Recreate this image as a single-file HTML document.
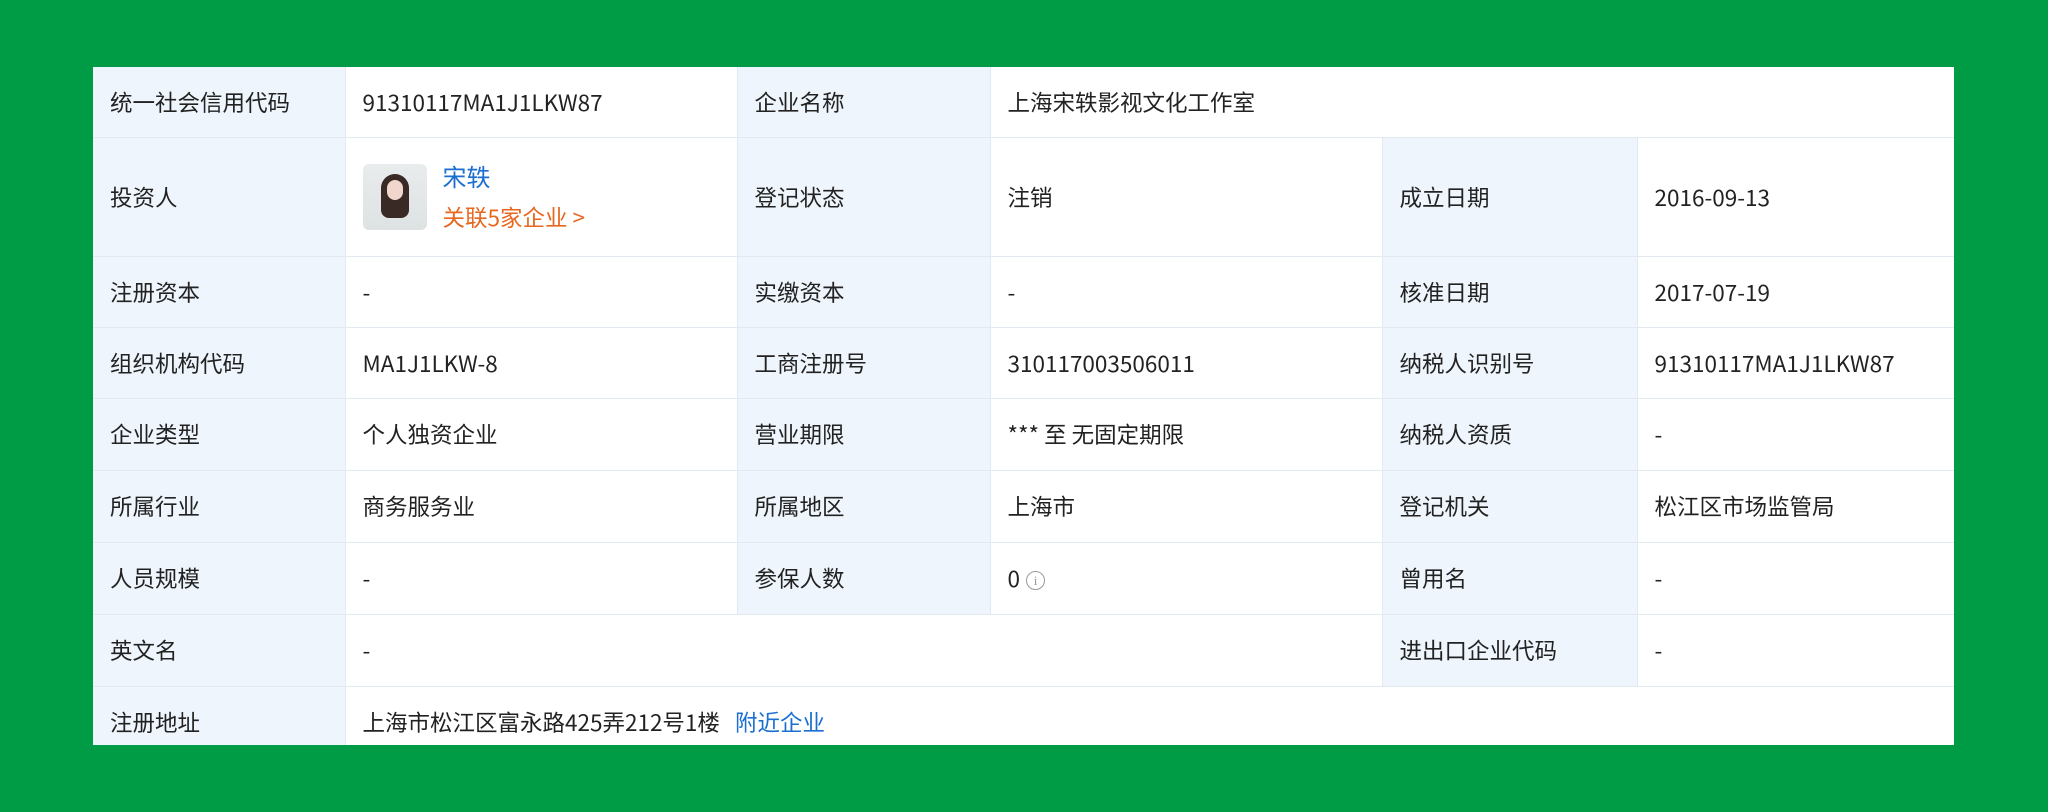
<!DOCTYPE html>
<html><head><meta charset="utf-8"><style>
html,body{margin:0;padding:0;}
body{width:2048px;height:812px;background:#009b45;position:relative;overflow:hidden;font-family:"Noto Sans CJK SC","Liberation Sans",sans-serif;}
.wrap{position:absolute;left:93px;top:67px;width:1861px;height:678px;background:#fff;overflow:hidden;}
table{border-collapse:collapse;table-layout:fixed;width:1861px;font-size:22.5px;color:#222;}
td{border:1px solid #e3e9f1;padding:0 0 0 17px;vertical-align:middle;white-space:nowrap;}
td.l{background:#eef5fc;}
tr:first-child td{border-top:none;}
td:first-child{border-left:none;}
td:last-child{border-right:none;}
.av{display:inline-block;width:64px;height:66px;border-radius:6px;background:linear-gradient(180deg,#e9ecec,#dde2e2);vertical-align:middle;position:relative;overflow:hidden;margin-right:16px;}
.av:before{content:"";position:absolute;left:18px;top:10px;width:28px;height:44px;border-radius:14px 14px 8px 8px;background:#3a2a26;}
.av:after{content:"";position:absolute;left:24px;top:16px;width:16px;height:20px;border-radius:8px;background:#f0d6cc;}
.blue{color:#1a6fd0;}
.or{color:#e8661e;}
.i{display:inline-block;width:17px;height:17px;border:1.5px solid #999;border-radius:50%;font-size:13px;line-height:17px;text-align:center;color:#999;vertical-align:middle;margin-left:6px;font-family:"Liberation Serif",serif;}
</style></head><body>
<div class="wrap"><table>
<colgroup><col style="width:252px"><col style="width:392px"><col style="width:253px"><col style="width:392px"><col style="width:255px"><col style="width:317px"></colgroup>
<tr style="height:70px"><td class="l">统一社会信用代码</td><td>91310117MA1J1LKW87</td><td class="l">企业名称</td><td colspan="3">上海宋轶影视文化工作室</td></tr>
<tr style="height:119px"><td class="l">投资人</td><td><span class="av"></span><span style="display:inline-block;vertical-align:middle;line-height:40px"><span class="blue" style="font-size:24px">宋轶</span><br><span class="or">关联5家企业 &gt;</span></span></td><td class="l">登记状态</td><td>注销</td><td class="l">成立日期</td><td>2016-09-13</td></tr>
<tr style="height:71px"><td class="l">注册资本</td><td>-</td><td class="l">实缴资本</td><td>-</td><td class="l">核准日期</td><td>2017-07-19</td></tr>
<tr style="height:71px"><td class="l">组织机构代码</td><td>MA1J1LKW-8</td><td class="l">工商注册号</td><td>310117003506011</td><td class="l">纳税人识别号</td><td>91310117MA1J1LKW87</td></tr>
<tr style="height:72px"><td class="l">企业类型</td><td>个人独资企业</td><td class="l">营业期限</td><td>*** 至 无固定期限</td><td class="l">纳税人资质</td><td>-</td></tr>
<tr style="height:72px"><td class="l">所属行业</td><td>商务服务业</td><td class="l">所属地区</td><td>上海市</td><td class="l">登记机关</td><td>松江区市场监管局</td></tr>
<tr style="height:72px"><td class="l">人员规模</td><td>-</td><td class="l">参保人数</td><td>0<span class="i">i</span></td><td class="l">曾用名</td><td>-</td></tr>
<tr style="height:72px"><td class="l">英文名</td><td colspan="3">-</td><td class="l">进出口企业代码</td><td>-</td></tr>
<tr style="height:72px"><td class="l">注册地址</td><td colspan="5">上海市松江区富永路425弄212号1楼 <span class="blue" style="margin-left:10px">附近企业</span></td></tr>
</table></div>
</body></html>
